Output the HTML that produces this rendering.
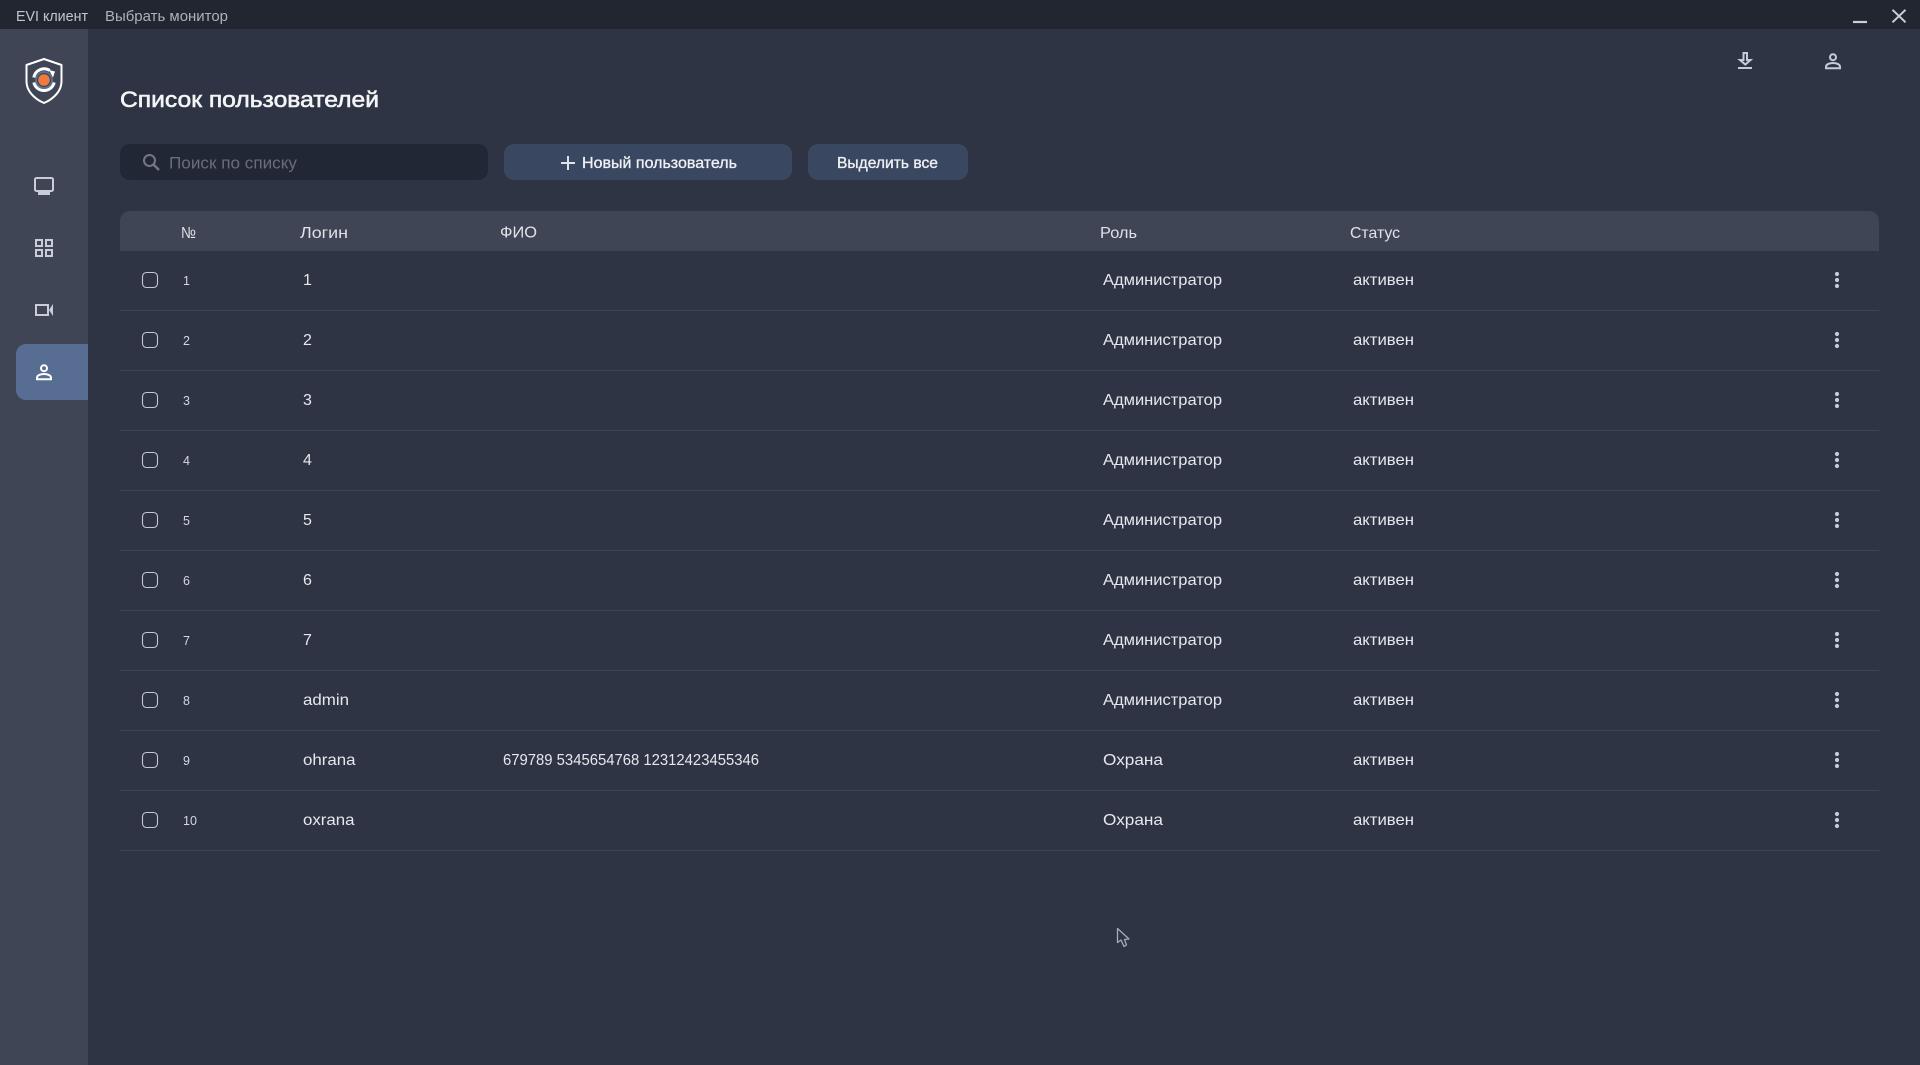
<!DOCTYPE html>
<html lang="ru">
<head>
<meta charset="utf-8">
<title>EVI клиент</title>
<style>
html,body{margin:0;padding:0;width:1920px;height:1065px;overflow:hidden;background:#2e3443}
svg{display:block}
text{font-family:"Liberation Sans","DejaVu Sans",sans-serif;white-space:pre}
.rn{font-size:12.5px;fill:#d3d7e0}
.rl{font-size:16px;fill:#e6e8ee}
.th{font-size:16px;fill:#dfe2e8}
.md{font-size:15.5px;fill:#eef0f3;stroke:#eef0f3;stroke-width:.35px}
</style>
</head>
<body>
<svg width="1920" height="1065" viewBox="0 0 1920 1065" xmlns="http://www.w3.org/2000/svg">
<defs>
<rect id="cb" x="0.5" y="0.5" width="15" height="15" rx="4" fill="none" stroke="#c5c9d4" stroke-width="1.1"/>
<g id="kb" fill="#c5cbdb"><circle cx="0" cy="-6" r="2.1"/><circle cx="0" cy="0" r="2.1"/><circle cx="0" cy="6" r="2.1"/></g>
<path id="person" d="M8 1.2a3 3 0 1 1 0 6a3 3 0 1 1 0-6ZM1 15.2v-1.4c0-2.6 3.6-3.8 7-3.8s7 1.2 7 3.800v1.400Z" fill="none" stroke-width="2"/>
</defs>

<rect width="1920" height="1065" fill="#2e3443"/>
<rect width="1920" height="29" fill="#212631"/>
<rect y="29" width="88" height="1036" fill="#3f4554"/>

<text x="16" y="21" font-size="15" fill="#c3c6cd" textLength="72" lengthAdjust="spacingAndGlyphs">EVI клиент</text>
<text x="105" y="21" font-size="15" fill="#aeb2bb" textLength="123" lengthAdjust="spacingAndGlyphs">Выбрать монитор</text>

<path d="M1853 22h14" stroke="#c9cdd8" stroke-width="2.2"/>
<path d="M1892.500 9.800l13 12.500M1905.500 9.800l-13 12.500" stroke="#c9cdd8" stroke-width="2" fill="none"/>

<path d="M1743.500 53h3.500v7h3.500l-5.200 4.500l-5.300-4.500h3.500Z" fill="none" stroke="#c5cbdb" stroke-width="2"/>
<path d="M1738 68h14" stroke="#c5cbdb" stroke-width="2"/>
<use href="#person" x="1825" y="53" stroke="#c5cbdb"/>

<!-- logo -->
<path d="M44 59l-17.500 6v16.500c0 9.500 8 17.500 17.500 21.500c9.500-4 17.500-12 17.500-21.500v-16.500Z" fill="none" stroke="#ffffff" stroke-width="2" stroke-linejoin="round"/>
<circle cx="44" cy="80" r="8" fill="none" stroke="#5a7198" stroke-width="1.800"/>
<path d="M33.800 77.500a10.500 10.500 0 0 1 16-7M54.200 82.500a10.500 10.500 0 0 1-20.400 0" fill="none" stroke="#ffffff" stroke-width="3"/>
<circle cx="44" cy="80" r="5.800" fill="#ef7a3a"/>
<path d="M49 70l6 1.500l-2 6Z" fill="#ffffff"/>

<!-- sidebar icons -->
<rect x="35" y="178" width="18" height="13" rx="1.500" fill="none" stroke="#c9cdd9" stroke-width="2"/>
<rect x="38" y="192" width="12" height="3" fill="#c9cdd9"/>
<g fill="none" stroke="#c9cdd9" stroke-width="2">
<rect x="36" y="240" width="6" height="6"/><rect x="46" y="240" width="6" height="6"/>
<rect x="36" y="250" width="6" height="6"/><rect x="46" y="250" width="6" height="6"/>
<rect x="36" y="305" width="12" height="10"/>
</g>
<path d="M49 310l4-6v12Z" fill="#c9cdd9"/>
<path d="M16 354a10 10 0 0 1 10-10h62v56h-62a10 10 0 0 1-10-10Z" fill="#586d92"/>
<use href="#person" x="36" y="364" stroke="#ffffff"/>

<!-- title -->
<text x="120" y="107" font-size="22.500" fill="#f4f5f7" stroke="#f4f5f7" stroke-width=".6" textLength="259" lengthAdjust="spacingAndGlyphs">Список пользователей</text>

<!-- search -->
<rect x="120" y="144" width="368" height="36" rx="10" fill="#212735"/>
<circle cx="149.500" cy="160.500" r="5.500" fill="none" stroke="#737884" stroke-width="2"/>
<path d="M153.500 164.500l5.500 5.500" stroke="#737884" stroke-width="2.400"/>
<text x="169" y="168.500" font-size="16.500" fill="#696e79" textLength="128" lengthAdjust="spacingAndGlyphs">Поиск по списку</text>

<!-- buttons -->
<rect x="504" y="144" width="288" height="36" rx="10" fill="#3a4760"/>
<path d="M561 163h14M568 156v14" stroke="#dfe2e9" stroke-width="2"/>
<text class="md" x="582" y="168" textLength="155" lengthAdjust="spacingAndGlyphs">Новый пользователь</text>
<rect x="808" y="144" width="160" height="36" rx="10" fill="#3a4760"/>
<text class="md" x="837" y="168" textLength="101" lengthAdjust="spacingAndGlyphs">Выделить все</text>

<!-- table header -->
<path d="M120 221a10 10 0 0 1 10-10h1739a10 10 0 0 1 10 10v30h-1759Z" fill="#3f4554"/>
<text class="th" x="181" y="238" textLength="15" lengthAdjust="spacingAndGlyphs">№</text>
<text class="th" x="300" y="238" textLength="48" lengthAdjust="spacingAndGlyphs">Логин</text>
<text class="th" x="500" y="237.500" textLength="37" lengthAdjust="spacingAndGlyphs">ФИО</text>
<text class="th" x="1100" y="238" textLength="37" lengthAdjust="spacingAndGlyphs">Роль</text>
<text class="th" x="1350" y="238" textLength="50" lengthAdjust="spacingAndGlyphs">Статус</text>

<!-- row lines -->
<g fill="#3d4352">
<rect x="120" y="310" width="1759" height="1"/>
<rect x="120" y="370" width="1759" height="1"/>
<rect x="120" y="430" width="1759" height="1"/>
<rect x="120" y="490" width="1759" height="1"/>
<rect x="120" y="550" width="1759" height="1"/>
<rect x="120" y="610" width="1759" height="1"/>
<rect x="120" y="670" width="1759" height="1"/>
<rect x="120" y="730" width="1759" height="1"/>
<rect x="120" y="790" width="1759" height="1"/>
<rect x="120" y="850" width="1759" height="1"/>
</g>

<!-- checkboxes -->
<use href="#cb" x="142" y="272"/>
<use href="#cb" x="142" y="332"/>
<use href="#cb" x="142" y="392"/>
<use href="#cb" x="142" y="452"/>
<use href="#cb" x="142" y="512"/>
<use href="#cb" x="142" y="572"/>
<use href="#cb" x="142" y="632"/>
<use href="#cb" x="142" y="692"/>
<use href="#cb" x="142" y="752"/>
<use href="#cb" x="142" y="812"/>

<!-- kebabs -->
<use href="#kb" x="1837" y="280"/>
<use href="#kb" x="1837" y="340"/>
<use href="#kb" x="1837" y="400"/>
<use href="#kb" x="1837" y="460"/>
<use href="#kb" x="1837" y="520"/>
<use href="#kb" x="1837" y="580"/>
<use href="#kb" x="1837" y="640"/>
<use href="#kb" x="1837" y="700"/>
<use href="#kb" x="1837" y="760"/>
<use href="#kb" x="1837" y="820"/>

<!-- numbers -->
<text class="rn" x="183" y="285">1</text>
<text class="rn" x="183" y="345">2</text>
<text class="rn" x="183" y="405">3</text>
<text class="rn" x="183" y="465">4</text>
<text class="rn" x="183" y="525">5</text>
<text class="rn" x="183" y="585">6</text>
<text class="rn" x="183" y="645">7</text>
<text class="rn" x="183" y="705">8</text>
<text class="rn" x="183" y="765">9</text>
<text class="rn" x="183" y="825">10</text>

<!-- logins -->
<text class="rl" x="303" y="285">1</text>
<text class="rl" x="303" y="345">2</text>
<text class="rl" x="303" y="405">3</text>
<text class="rl" x="303" y="465">4</text>
<text class="rl" x="303" y="525">5</text>
<text class="rl" x="303" y="585">6</text>
<text class="rl" x="303" y="645">7</text>
<text class="rl" x="303" y="705" textLength="46" lengthAdjust="spacingAndGlyphs">admin</text>
<text class="rl" x="303" y="765" textLength="52.500" lengthAdjust="spacingAndGlyphs">ohrana</text>
<text class="rl" x="303" y="825" textLength="51.500" lengthAdjust="spacingAndGlyphs">oxrana</text>

<text class="rl" x="503" y="765" textLength="256" lengthAdjust="spacingAndGlyphs">679789 5345654768 12312423455346</text>

<!-- roles -->
<text class="rl" x="1103" y="285" textLength="119" lengthAdjust="spacingAndGlyphs">Администратор</text>
<text class="rl" x="1103" y="345" textLength="119" lengthAdjust="spacingAndGlyphs">Администратор</text>
<text class="rl" x="1103" y="405" textLength="119" lengthAdjust="spacingAndGlyphs">Администратор</text>
<text class="rl" x="1103" y="465" textLength="119" lengthAdjust="spacingAndGlyphs">Администратор</text>
<text class="rl" x="1103" y="525" textLength="119" lengthAdjust="spacingAndGlyphs">Администратор</text>
<text class="rl" x="1103" y="585" textLength="119" lengthAdjust="spacingAndGlyphs">Администратор</text>
<text class="rl" x="1103" y="645" textLength="119" lengthAdjust="spacingAndGlyphs">Администратор</text>
<text class="rl" x="1103" y="705" textLength="119" lengthAdjust="spacingAndGlyphs">Администратор</text>
<text class="rl" x="1103" y="765" textLength="60" lengthAdjust="spacingAndGlyphs">Охрана</text>
<text class="rl" x="1103" y="825" textLength="60" lengthAdjust="spacingAndGlyphs">Охрана</text>

<!-- status -->
<text class="rl" x="1353" y="285" textLength="61" lengthAdjust="spacingAndGlyphs">активен</text>
<text class="rl" x="1353" y="345" textLength="61" lengthAdjust="spacingAndGlyphs">активен</text>
<text class="rl" x="1353" y="405" textLength="61" lengthAdjust="spacingAndGlyphs">активен</text>
<text class="rl" x="1353" y="465" textLength="61" lengthAdjust="spacingAndGlyphs">активен</text>
<text class="rl" x="1353" y="525" textLength="61" lengthAdjust="spacingAndGlyphs">активен</text>
<text class="rl" x="1353" y="585" textLength="61" lengthAdjust="spacingAndGlyphs">активен</text>
<text class="rl" x="1353" y="645" textLength="61" lengthAdjust="spacingAndGlyphs">активен</text>
<text class="rl" x="1353" y="705" textLength="61" lengthAdjust="spacingAndGlyphs">активен</text>
<text class="rl" x="1353" y="765" textLength="61" lengthAdjust="spacingAndGlyphs">активен</text>
<text class="rl" x="1353" y="825" textLength="61" lengthAdjust="spacingAndGlyphs">активен</text>

<!-- cursor -->
<path d="M1117.500 928.500v14l3.500-2.500l3 6.500l2.500-1.500l-2-5.500l4.500-.5Z" fill="#2e3443" stroke="#a6abb8" stroke-width="1.300" stroke-linejoin="round"/>
</svg>
</body>
</html>
